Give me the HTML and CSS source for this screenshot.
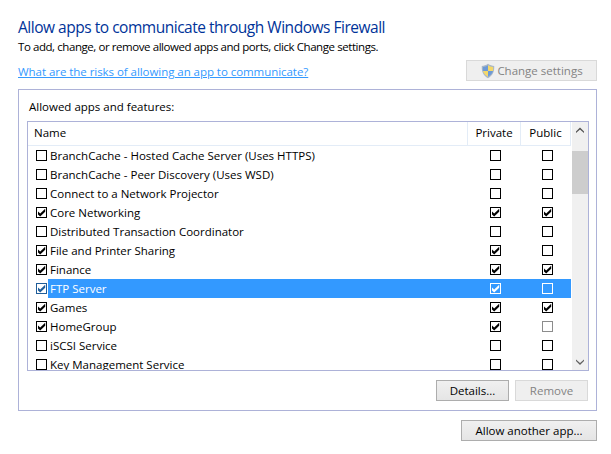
FILE: index.html
```html
<!DOCTYPE html>
<html lang="en">
<head>
    <meta charset="UTF-8">
    <title>Allowed apps</title>
    <link rel="stylesheet" href="styles.css">
</head>
<body>
    <svg class="defs" width="0" height="0">
        <symbol id="tick" viewBox="0 0 11 11">
            <path d="M2 4.6 L4.2 6.4 L9.2 1.8 V4.8 L4.2 9.4 L2 7.4 Z"/>
        </symbol>
    </svg>

    <h1>Allow apps to communicate through Windows Firewall</h1>
    <p class="intro">To add, change, or remove allowed apps and ports, click Change settings.</p>

    <div class="link-row">
        <a href="#" class="risk-link">What are the risks of allowing an app to communicate?</a>
        <button class="btn btn-disabled btn-settings">
            <svg class="shield" width="16" height="16" viewBox="0 0 16 16">
                <path d="M8 .8 C10 2.2 12 2.8 14.2 2.9 C14.6 8.5 12.6 12.6 8 15.2 C3.4 12.6 1.4 8.5 1.8 2.9 C4 2.8 6 2.2 8 .8 Z" fill="#a9b7c8"/>
                <path d="M8 2.2 V8 H3 C2.8 6.6 2.8 5.2 2.9 3.9 C4.8 3.7 6.4 3.2 8 2.2 Z" fill="#6d9ad6"/>
                <path d="M8 2.2 C9.6 3.2 11.2 3.7 13.1 3.9 C13.2 5.2 13.2 6.6 13 8 H8 Z" fill="#f4d86a"/>
                <path d="M3 8 H8 V13.8 C5.4 12.3 3.7 10.4 3 8 Z" fill="#f4d86a"/>
                <path d="M13 8 H8 V13.8 C10.6 12.3 12.3 10.4 13 8 Z" fill="#6d9ad6"/>
            </svg>
            Change settings
        </button>
    </div>

    <section class="group">
        <div class="group-label">Allowed apps and features:</div>
        <div class="listbox">
            <div class="list-main">
                <div class="row head">
                    <div class="cell-name">Name</div>
                    <div class="cell-col">Private</div>
                    <div class="cell-col">Public</div>
                </div>

                <div class="row">
                    <div class="cell-name"><span class="check"></span><span class="label">BranchCache - Hosted Cache Server (Uses HTTPS)</span></div>
                    <div class="cell-col"><span class="check"></span></div>
                    <div class="cell-col"><span class="check"></span></div>
                </div>
                <div class="row">
                    <div class="cell-name"><span class="check"></span><span class="label">BranchCache - Peer Discovery (Uses WSD)</span></div>
                    <div class="cell-col"><span class="check"></span></div>
                    <div class="cell-col"><span class="check"></span></div>
                </div>
                <div class="row">
                    <div class="cell-name"><span class="check"></span><span class="label">Connect to a Network Projector</span></div>
                    <div class="cell-col"><span class="check"></span></div>
                    <div class="cell-col"><span class="check"></span></div>
                </div>
                <div class="row">
                    <div class="cell-name"><span class="check"><svg><use href="#tick"/></svg></span><span class="label">Core Networking</span></div>
                    <div class="cell-col"><span class="check"><svg><use href="#tick"/></svg></span></div>
                    <div class="cell-col"><span class="check"><svg><use href="#tick"/></svg></span></div>
                </div>
                <div class="row">
                    <div class="cell-name"><span class="check"></span><span class="label">Distributed Transaction Coordinator</span></div>
                    <div class="cell-col"><span class="check"></span></div>
                    <div class="cell-col"><span class="check"></span></div>
                </div>
                <div class="row">
                    <div class="cell-name"><span class="check"><svg><use href="#tick"/></svg></span><span class="label">File and Printer Sharing</span></div>
                    <div class="cell-col"><span class="check"><svg><use href="#tick"/></svg></span></div>
                    <div class="cell-col"><span class="check"></span></div>
                </div>
                <div class="row">
                    <div class="cell-name"><span class="check"><svg><use href="#tick"/></svg></span><span class="label">Finance</span></div>
                    <div class="cell-col"><span class="check"><svg><use href="#tick"/></svg></span></div>
                    <div class="cell-col"><span class="check"><svg><use href="#tick"/></svg></span></div>
                </div>
                <div class="row selected">
                    <div class="cell-name"><span class="check"><svg><use href="#tick"/></svg></span><span class="label">FTP Server</span></div>
                    <div class="cell-col"><span class="check"><svg><use href="#tick"/></svg></span></div>
                    <div class="cell-col"><span class="check"></span></div>
                </div>
                <div class="row">
                    <div class="cell-name"><span class="check"><svg><use href="#tick"/></svg></span><span class="label">Games</span></div>
                    <div class="cell-col"><span class="check"><svg><use href="#tick"/></svg></span></div>
                    <div class="cell-col"><span class="check"><svg><use href="#tick"/></svg></span></div>
                </div>
                <div class="row">
                    <div class="cell-name"><span class="check"><svg><use href="#tick"/></svg></span><span class="label">HomeGroup</span></div>
                    <div class="cell-col"><span class="check"><svg><use href="#tick"/></svg></span></div>
                    <div class="cell-col"><span class="check check-off"></span></div>
                </div>
                <div class="row">
                    <div class="cell-name"><span class="check"></span><span class="label">iSCSI Service</span></div>
                    <div class="cell-col"><span class="check"></span></div>
                    <div class="cell-col"><span class="check"></span></div>
                </div>
                <div class="row">
                    <div class="cell-name"><span class="check"></span><span class="label">Key Management Service</span></div>
                    <div class="cell-col"><span class="check"></span></div>
                    <div class="cell-col"><span class="check"></span></div>
                </div>
            </div>

            <div class="scrollbar">
                <svg class="arrow" width="16" height="17" viewBox="0 0 16 17"><path d="M4 9.5 L8 5.5 L12 9.5 V11 L8 7.5 L4 11 Z"/></svg>
                <div class="thumb"></div>
                <svg class="arrow arrow-down" width="16" height="17" viewBox="0 0 16 17"><path d="M4 6.5 L8 10 L12 6.5 V8 L8 12 L4 8 Z"/></svg>
            </div>
        </div>

        <div class="group-buttons">
            <button class="btn btn-details">Details...</button>
            <button class="btn btn-disabled btn-remove">Remove</button>
        </div>
    </section>

    <div class="footer">
        <button class="btn btn-allow">Allow another app...</button>
    </div>
</body>
</html>
```

FILE: styles.css
```css
*{
    margin:0;
    padding:0;
    box-sizing:border-box;
    font-family:'Open Sans', 'Noto Sans', sans-serif;
}
body {
    background-color:#fff;
    color:#000;
    font-size:11.5px;
    padding:16px 14px 0 18px;
}
.defs {
    position:absolute;
}
h1 {
    font-size:15.5px;
    font-weight:400;
    line-height:22px;
    letter-spacing:-0.48px;
    color:#003399;
}
.intro {
    line-height:16px;
    margin-top:1px;
    letter-spacing:-0.43px;
}
.link-row {
    display:flex;
    justify-content:space-between;
    align-items:flex-start;
    margin-top:5px;
    height:29px;
}
.risk-link {
    color:#3399ff;
    line-height:16px;
    margin-top:4px;
    letter-spacing:-0.05px;
}
.btn {
    display:flex;
    align-items:center;
    justify-content:center;
    height:21px;
    font-size:11.5px;
    color:#000;
    border:1px solid #adadad;
    background:linear-gradient(#f0f0f0, #e5e5e5);
}
.btn-disabled {
    color:#838383;
    background:#efefef;
    border-color:#d9d9d9;
}
.btn-settings {
    width:131px;
    gap:1px;
}
.group {
    border:1px solid #adb2d8;
    height:322px;
    padding:9px 7px 0 8px;
}
.group-label {
    line-height:16px;
    padding-left:2px;
    margin-bottom:6px;
}
.listbox {
    display:flex;
    border:1px solid #adb2d8;
    height:250px;
    overflow:hidden;
}
.list-main {
    width:543px;
}
.row {
    display:grid;
    grid-template-columns:440px 53px 50px;
    height:19px;
    align-items:center;
}
.head {
    height:24px;
    align-items:stretch;
}
.cell-name {
    display:flex;
    align-items:center;
    padding-left:8px;
    height:19px;
}
.cell-col {
    display:flex;
    justify-content:center;
    height:19px;
    align-items:center;
}
.cell-col .check {
    margin-left:2px;
}
.head .cell-name,
.head .cell-col {
    height:24px;
    padding-bottom:2px;
    border-right:1px solid #e3ecf7;
    border-bottom:1px solid #e3ecf7;
}
.head .cell-name {
    padding-left:6px;
}
.label {
    margin-left:1px;
    padding-left:2px;
    line-height:19px;
    flex:1;
    white-space:nowrap;
}
.check {
    display:block;
    width:11px;
    height:11px;
    border:1px solid #000;
    background:#fff;
    flex-shrink:0;
}
.check svg {
    display:block;
    width:11px;
    height:11px;
    margin:-1px;
    fill:#000;
}
.check-off {
    border-color:#8c8c8c;
}
.row.selected .cell-name .label,
.row.selected .cell-col {
    background:#3399ff;
    color:#fff;
}
.row.selected .cell-col .check {
    background:transparent;
    border-color:#fff;
}
.row.selected .cell-col .check svg {
    fill:#fff;
}
.row.selected .cell-name .check {
    border-color:#1f5d99;
}
.row.selected .cell-name .check svg {
    fill:#1f5d99;
}
.scrollbar {
    width:16px;
    margin-left:1px;
    background:#f0f0f0;
    display:flex;
    flex-direction:column;
}
.arrow {
    fill:#505050;
    flex-shrink:0;
}
.arrow-down {
    margin-top:auto;
    fill:#606060;
}
.thumb {
    height:43px;
    margin-top:12px;
    background:#cdcdcd;
}
.group-buttons {
    display:flex;
    justify-content:flex-end;
    gap:6px;
    margin-top:9px;
    margin-right:1px;
}
.btn-details {
    width:73px;
}
.btn-remove {
    width:73px;
}
.footer {
    display:flex;
    justify-content:flex-end;
    margin-top:9px;
}
.btn-allow {
    width:136px;
}
```
